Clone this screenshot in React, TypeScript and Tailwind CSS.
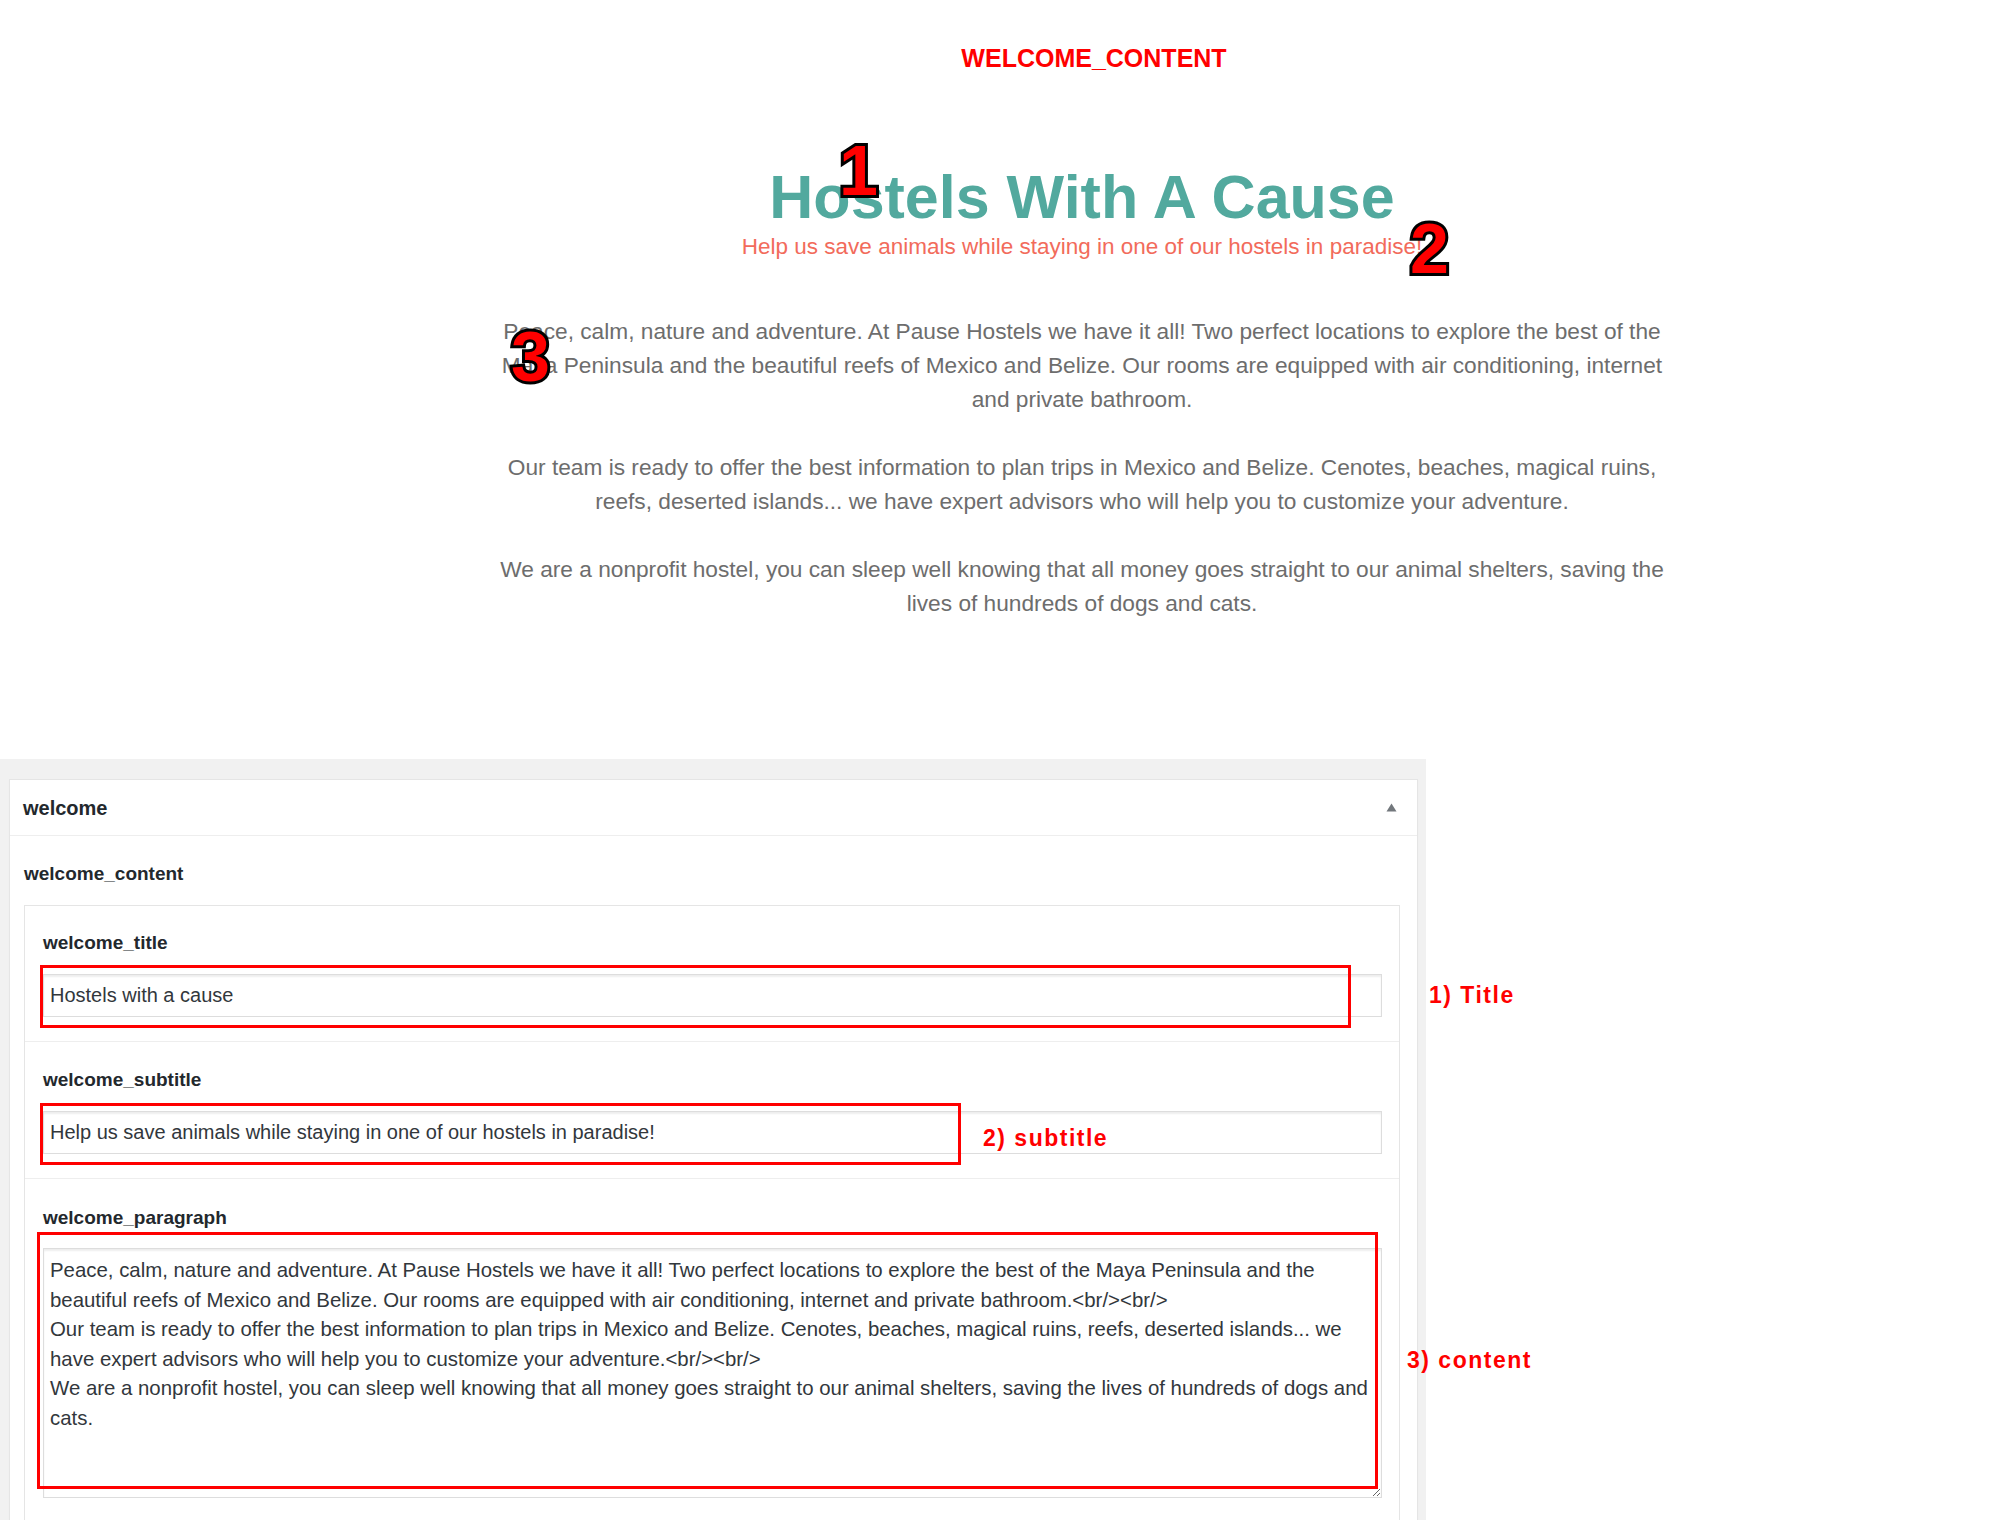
import React from 'react';

// Annotated screenshot: front-end "welcome" block + its admin fields

const PARAGRAPH_LINES = [
  'Peace, calm, nature and adventure. At Pause Hostels we have it all! Two perfect locations to explore the best of the',
  'Maya Peninsula and the beautiful reefs of Mexico and Belize. Our rooms are equipped with air conditioning, internet',
  'and private bathroom.',
  '',
  'Our team is ready to offer the best information to plan trips in Mexico and Belize. Cenotes, beaches, magical ruins,',
  'reefs, deserted islands... we have expert advisors who will help you to customize your adventure.',
  '',
  'We are a nonprofit hostel, you can sleep well knowing that all money goes straight to our animal shelters, saving the',
  'lives of hundreds of dogs and cats.',
];

const TEXTAREA_VALUE = [
  'Peace, calm, nature and adventure. At Pause Hostels we have it all! Two perfect locations to explore the best of the Maya Peninsula and the',
  'beautiful reefs of Mexico and Belize. Our rooms are equipped with air conditioning, internet and private bathroom.<br/><br/>',
  'Our team is ready to offer the best information to plan trips in Mexico and Belize. Cenotes, beaches, magical ruins, reefs, deserted islands... we',
  'have expert advisors who will help you to customize your adventure.<br/><br/>',
  'We are a nonprofit hostel, you can sleep well knowing that all money goes straight to our animal shelters, saving the lives of hundreds of dogs and',
  'cats.',
].join('\n');

function Marker({ n, className }: { n: string; className: string }) {
  return (
    <span
      className={`absolute text-[70px] leading-[70px] font-bold text-[#ff0000] [-webkit-text-stroke:6px_#000] [paint-order:stroke_fill] ${className}`}
    >
      {n}
    </span>
  );
}

function Note({ children, className }: { children: React.ReactNode; className: string }) {
  return (
    <span className={`absolute whitespace-nowrap text-[23px] leading-[23px] font-bold tracking-[1.5px] text-[#ff0000] ${className}`}>
      {children}
    </span>
  );
}

export default function App() {
  return (
    <div className="min-h-screen bg-white font-['Liberation_Sans',Arial,sans-serif]">
      {/* front-end preview */}
      <section className="relative h-[759px] flex flex-col items-center pl-[152px]">
        <div className="pt-[46px] ml-[24px] text-[25px] leading-[25px] font-bold text-[#ff0000]">WELCOME_CONTENT</div>
        <h1 className="mt-[96px] text-[61px] leading-[61px] font-bold text-[#52a99e]">Hostels With A Cause</h1>
        <p className="mt-[8px] text-[22.5px] leading-[22px] text-[#f26b5b]">
          Help us save animals while staying in one of our hostels in paradise!
        </p>
        <p className="mt-[56px] text-center text-[22.7px] leading-[34px] text-[#6d6d6d] whitespace-nowrap">
          {PARAGRAPH_LINES.map((l, i) => (
            <React.Fragment key={i}>
              {l}
              {i < PARAGRAPH_LINES.length - 1 && <br />}
            </React.Fragment>
          ))}
        </p>

        <Marker n="1" className="left-[839px] top-[136px]" />
        <Marker n="2" className="left-[1410px] top-[214px]" />
        <Marker n="3" className="left-[511px] top-[322px]" />
      </section>

      {/* admin metabox */}
      <div className="w-[1426px] bg-[#f1f1f1] pt-[20px] pl-[9px] pr-[8px] pb-[20px]">
        <div className="bg-white border border-[#e5e5e5] shadow-[0_1px_1px_rgba(0,0,0,0.04)]">
          <div className="h-[56px] flex items-center justify-between pl-[13px] pr-[20px] border-b border-[#eeeeee]">
            <span className="text-[20px] leading-[20px] font-bold text-[#23282d]">welcome</span>
            <svg width="11" height="9" viewBox="0 0 11 9">
              <path d="M5.5 0.5 L10.5 8.5 L0.5 8.5 Z" fill="#72777c" />
            </svg>
          </div>

          <div className="pl-[14px] pr-[17px] pt-[28px]">
            <div className="text-[19px] leading-[20px] font-bold text-[#23282d]">welcome_content</div>

            <div className="mt-[21px] border border-[#e5e5e5]">
              {/* title */}
              <div className="pl-[18px] pr-[17px] pt-[27px] pb-[24px] border-b border-[#eeeeee]">
                <div className="text-[19px] leading-[20px] font-bold text-[#23282d]">welcome_title</div>
                <div className="relative mt-[21px]">
                  <input
                    readOnly
                    value="Hostels with a cause"
                    className="block w-full h-[43px] px-[6px] border border-[#dddddd] shadow-[inset_0_2px_2px_rgba(0,0,0,0.07)] text-[20px] text-[#32373c] outline-none"
                  />
                  <div className="absolute left-[-3px] top-[-9px] w-[1311px] h-[63px] border-[3px] border-[#ff0000]" />
                  <Note className="left-[1386px] top-[10px]">1) Title</Note>
                </div>
              </div>

              {/* subtitle */}
              <div className="pl-[18px] pr-[17px] pt-[28px] pb-[24px] border-b border-[#eeeeee]">
                <div className="text-[19px] leading-[20px] font-bold text-[#23282d]">welcome_subtitle</div>
                <div className="relative mt-[21px]">
                  <input
                    readOnly
                    value="Help us save animals while staying in one of our hostels in paradise!"
                    className="block w-full h-[43px] px-[6px] border border-[#dddddd] shadow-[inset_0_2px_2px_rgba(0,0,0,0.07)] text-[20px] text-[#32373c] outline-none"
                  />
                  <div className="absolute left-[-3px] top-[-8px] w-[921px] h-[62px] border-[3px] border-[#ff0000]" />
                  <Note className="left-[940px] top-[16px]">2) subtitle</Note>
                </div>
              </div>

              {/* paragraph */}
              <div className="pl-[18px] pr-[17px] pt-[29px] pb-[24px]">
                <div className="text-[19px] leading-[20px] font-bold text-[#23282d]">welcome_paragraph</div>
                <div className="relative mt-[20px]">
                  <textarea
                    readOnly
                    wrap="off"
                    value={TEXTAREA_VALUE}
                    className="block w-full h-[250px] px-[6px] pt-[7px] border border-[#dddddd] shadow-[inset_0_2px_2px_rgba(0,0,0,0.07)] text-[20.4px] leading-[29.6px] text-[#32373c] overflow-hidden whitespace-pre outline-none"
                  />
                  <div className="absolute left-[-6px] top-[-16px] w-[1341px] h-[257px] border-[3px] border-[#ff0000] pointer-events-none" />
                  <Note className="left-[1364px] top-[101px]">3) content</Note>
                </div>
              </div>
            </div>
          </div>
        </div>
      </div>
    </div>
  );
}
